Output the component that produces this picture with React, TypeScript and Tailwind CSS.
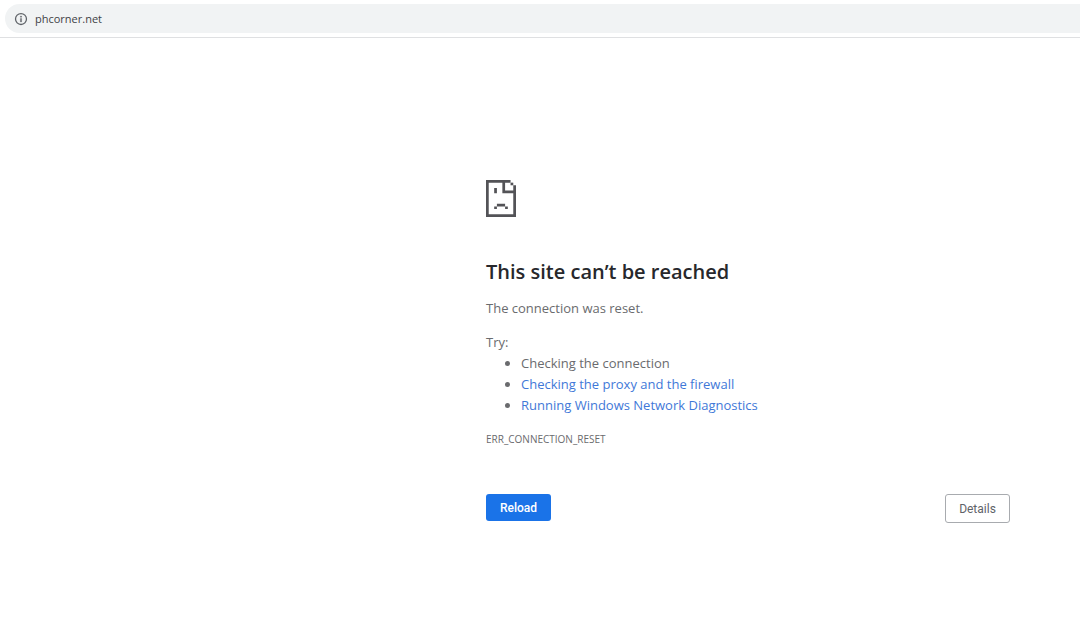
const suggestions = [
  { text: "Checking the connection" },
  { text: "Checking the proxy and the firewall", href: "#proxy" },
  { text: "Running Windows Network Diagnostics", href: "#diagnostics" },
];

function InfoIcon() {
  return (
    <svg className="h-[14px] w-[14px] shrink-0" viewBox="0 0 24 24" fill="#5f6368" aria-hidden="true">
      <path d="M11 7h2v2h-2zm0 4h2v6h-2z" stroke="#5f6368" strokeWidth="0.6" />
      <path d="M12 1.5a10.5 10.5 0 1 0 0 21 10.5 10.5 0 0 0 0-21zm0 18.8a8.3 8.3 0 1 1 0-16.6 8.3 8.3 0 0 1 0 16.6z" />
    </svg>
  );
}

function SadPageIcon() {
  return (
    <svg
      className="block h-[37px] w-[30px]"
      viewBox="0 0 11 14"
      preserveAspectRatio="none"
      fill="#535357"
      aria-hidden="true"
    >
      {/* Page outline with the folded corner */}
      <path d="M0 0H9V1H7V4H10V2H11V14H0ZM1 1V13H10V5H6V1Z" fillRule="evenodd" />
      <path d="M9 1H10V2H9Z" />
      {/* Face */}
      <path d="M3 3H4V5H3ZM4 9H7V10H4ZM3 10H4V11H3ZM7 10H8V11H7Z" />
    </svg>
  );
}

export default function App() {
  return (
    <div className="min-h-screen bg-white font-['Open_Sans','Noto_Sans',sans-serif] text-[13px] leading-[21px] text-[#6a6b6e]">
      {/* Address bar */}
      <header className="border-b border-[#dfe0e2] pt-1 pb-1 pl-[5px]">
        <div className="flex h-[29px] items-center gap-[7px] rounded-l-full bg-[#f1f3f4] pl-[9px]">
          <InfoIcon />
          <input
            type="text"
            aria-label="Address"
            defaultValue="phcorner.net"
            className="min-w-0 flex-1 bg-transparent text-[11px] text-[#3f4246] outline-none"
          />
        </div>
      </header>

      {/* Error message */}
      <main className="ml-[45%] max-w-[524px] pt-[142px]">
        <SadPageIcon />
        <h1 className="mt-[41px] text-[20px] leading-[28px] font-semibold text-[#27282c]">
          This site can’t be reached
        </h1>
        <p className="mt-3">The connection was reset.</p>

        <div className="mt-[13px]">
          <p>Try:</p>
          <ul className="list-disc pl-[35px]">
            {suggestions.map((item) => (
              <li key={item.text}>
                {item.href ? (
                  <a href={item.href} className="text-[#3f78d8]">
                    {item.text}
                  </a>
                ) : (
                  item.text
                )}
              </li>
            ))}
          </ul>
        </div>

        <p className="mt-[13px] text-[10px]">ERR_CONNECTION_RESET</p>

        <div className="mt-11 flex items-start justify-between font-[Roboto,'Liberation_Sans',sans-serif] text-[12px] leading-[16px]">
          <button type="button" className="h-[27px] w-[65px] rounded-[3px] bg-[#1a73e8] font-medium text-white">
            Reload
          </button>
          <button
            type="button"
            className="h-[29px] w-[65px] rounded-[3px] border border-[#a8abaf] bg-white text-[#5f6368]"
          >
            Details
          </button>
        </div>
      </main>
    </div>
  );
}
